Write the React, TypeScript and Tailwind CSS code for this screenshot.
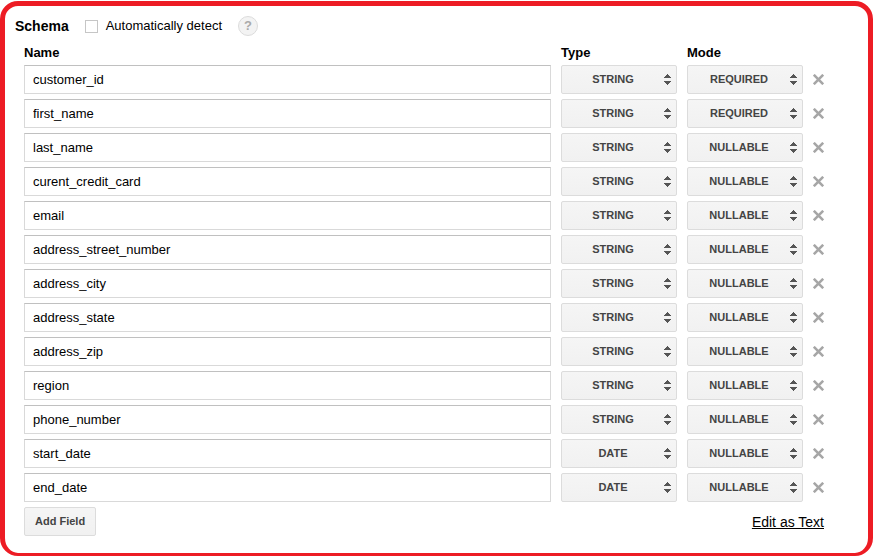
import { useState } from "react";

type Field = { name: string; type: string; mode: string };

const initialFields: Field[] = [
  { name: "customer_id", type: "STRING", mode: "REQUIRED" },
  { name: "first_name", type: "STRING", mode: "REQUIRED" },
  { name: "last_name", type: "STRING", mode: "NULLABLE" },
  { name: "curent_credit_card", type: "STRING", mode: "NULLABLE" },
  { name: "email", type: "STRING", mode: "NULLABLE" },
  { name: "address_street_number", type: "STRING", mode: "NULLABLE" },
  { name: "address_city", type: "STRING", mode: "NULLABLE" },
  { name: "address_state", type: "STRING", mode: "NULLABLE" },
  { name: "address_zip", type: "STRING", mode: "NULLABLE" },
  { name: "region", type: "STRING", mode: "NULLABLE" },
  { name: "phone_number", type: "STRING", mode: "NULLABLE" },
  { name: "start_date", type: "DATE", mode: "NULLABLE" },
  { name: "end_date", type: "DATE", mode: "NULLABLE" },
];

const types = ["STRING", "DATE"];
const modes = ["NULLABLE", "REQUIRED"];

function Picker({
  label,
  value,
  options,
  onChange,
}: {
  label: string;
  value: string;
  options: string[];
  onChange: (value: string) => void;
}) {
  return (
    <div className="relative w-[116px]">
      <select
        aria-label={label}
        value={value}
        onChange={(e) => onChange(e.target.value)}
        className="block h-[29px] w-full appearance-none rounded-xs border border-[#dcdcdc] bg-linear-to-b from-[#f5f5f5] to-[#f1f1f1] pr-5 pl-2 text-center text-[11px] font-bold text-[#444] [text-align-last:center]"
      >
        {options.map((option) => (
          <option key={option}>{option}</option>
        ))}
      </select>
      <svg
        aria-hidden="true"
        viewBox="0 0 7 11"
        shapeRendering="crispEdges"
        className="pointer-events-none absolute top-[9px] right-1.5 h-[11px] w-[7px] fill-[#555]"
      >
        <path d="M3 0h1v1h1v1h1v1h1v1H0V3h1V2h1V1h1zM0 7h7v1H6v1H5v1H4v1H3v-1H2V9H1V8H0z" />
      </svg>
    </div>
  );
}

export default function App() {
  const [fields, setFields] = useState(initialFields);

  const update = (index: number, patch: Partial<Field>) =>
    setFields(fields.map((f, i) => (i === index ? { ...f, ...patch } : f)));

  return (
    <div className="bg-white pt-px pr-px font-['Liberation_Sans',Arial,sans-serif] text-[13px] text-black">
      <main className="rounded-[18px] border-5 border-b-3 border-[#ed1c24] pt-2 pr-[44px] pb-[17px] pl-[10px]">
        <header className="flex h-6 items-center">
          <h1 className="text-sm font-bold">Schema</h1>
          <label className="ml-4 flex items-center gap-2">
            <input
              type="checkbox"
              className="size-[13px] appearance-none border border-[#c6c6c6] bg-white checked:bg-[#666]"
            />
            Automatically detect
          </label>
          <button
            type="button"
            aria-label="Help"
            className="ml-4 flex size-5 items-center justify-center rounded-full border border-[#dcdcdc] bg-[#f3f3f3] font-bold text-[#aaa]"
          >
            ?
          </button>
        </header>

        <div className="pl-[9px]">
          <table className="w-full border-separate border-spacing-0">
            <thead>
              <tr className="h-[27px] text-left leading-4">
                <th className="p-0 pt-[2px] align-middle font-bold">Name</th>
                <th className="w-[126px] p-0 pt-[2px] pl-[10px] align-middle font-bold">Type</th>
                <th className="w-[126px] p-0 pt-[2px] pl-[10px] align-middle font-bold">Mode</th>
                <td className="w-[21px]" />
              </tr>
            </thead>
            <tbody>
              {fields.map((field, i) => (
                <tr key={i}>
                  <td className="p-0 pb-[5px]">
                    <input
                      type="text"
                      aria-label="Name"
                      value={field.name}
                      onChange={(e) => update(i, { name: e.target.value })}
                      className="block h-[29px] w-full border border-[#d9d9d9] border-t-[#c0c0c0] bg-white px-2"
                    />
                  </td>
                  <td className="p-0 pb-[5px] pl-[10px]">
                    <Picker label="Type" value={field.type} options={types} onChange={(type) => update(i, { type })} />
                  </td>
                  <td className="p-0 pb-[5px] pl-[10px]">
                    <Picker label="Mode" value={field.mode} options={modes} onChange={(mode) => update(i, { mode })} />
                  </td>
                  <td className="p-0 pb-[5px] pl-[10px]">
                    <button
                      type="button"
                      aria-label={`Remove ${field.name}`}
                      onClick={() => setFields(fields.filter((_, n) => n !== i))}
                      className="block"
                    >
                      <svg aria-hidden="true" viewBox="0 0 11 11" className="size-[11px] stroke-[#a6a6a6]">
                        <path d="M.8.8l9.4 9.4M10.2.8L.8 10.2" strokeWidth="2.6" />
                      </svg>
                    </button>
                  </td>
                </tr>
              ))}
            </tbody>
          </table>
          <footer className="flex items-center justify-between">
            <button
              type="button"
              onClick={() => setFields([...fields, { name: "", type: "STRING", mode: "NULLABLE" }])}
              className="h-[29px] rounded-xs border border-[#dcdcdc] bg-linear-to-b from-[#f5f5f5] to-[#f1f1f1] px-[10px] text-[11px] font-bold text-[#444]"
            >
              Add Field
            </button>
            <a href="#text" className="text-sm underline">
              Edit as Text
            </a>
          </footer>
        </div>
      </main>
    </div>
  );
}
